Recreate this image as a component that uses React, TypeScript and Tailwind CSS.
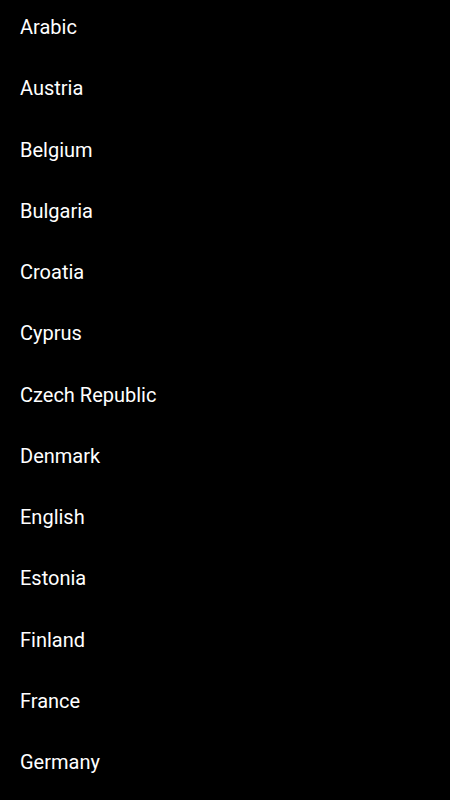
const items = [
  "Arabic",
  "Austria",
  "Belgium",
  "Bulgaria",
  "Croatia",
  "Cyprus",
  "Czech Republic",
  "Denmark",
  "English",
  "Estonia",
  "Finland",
  "France",
  "Germany",
];

export default function App() {
  return (
    <div className="w-[450px] h-[800px] overflow-hidden bg-black text-white" style={{ fontFamily: "Roboto, sans-serif" }}>
      <div className="flex flex-col">
        {items.map((t) => (
          <div key={t} className="h-[61.25px] shrink-0 pl-5 pt-[15px]">
            <span className="block text-[20px] leading-[24px]">{t}</span>
          </div>
        ))}
      </div>
    </div>
  );
}
